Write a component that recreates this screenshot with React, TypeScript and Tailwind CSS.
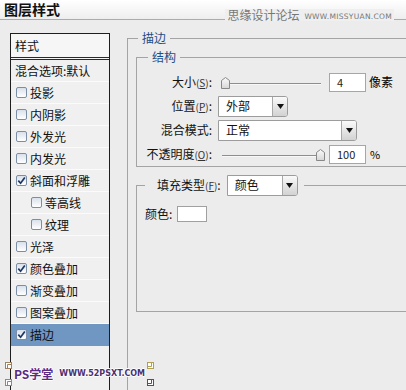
import React from 'react'

const cjk = { fontFamily: '"Noto Sans CJK SC", "Liberation Sans", sans-serif' }

const styleRows = [
  { label: '投影', checked: false },
  { label: '内阴影', checked: false },
  { label: '外发光', checked: false },
  { label: '内发光', checked: false },
  { label: '斜面和浮雕', checked: true },
  { label: '等高线', checked: false, sub: true },
  { label: '纹理', checked: false, sub: true },
  { label: '光泽', checked: false },
  { label: '颜色叠加', checked: true },
  { label: '渐变叠加', checked: false },
  { label: '图案叠加', checked: false },
  { label: '描边', checked: true, active: true },
]

function Checkbox({ checked }: { checked: boolean }) {
  return (
    <span className="flex h-[11px] w-[11px] shrink-0 items-center justify-center rounded-[2px] border border-[#7c8ea6] bg-linear-to-b from-[#d9e1ea] to-white">
      {checked && (
        <svg width="9" height="9" viewBox="0 0 9 9">
          <path d="M1.3 4.6 L3.6 7.2 L7.8 1.4" fill="none" stroke="#1d3764" strokeWidth="1.7" />
        </svg>
      )}
    </span>
  )
}

function Select({ value, width }: { value: string; width: number }) {
  return (
    <div
      className="flex h-[21px] items-stretch rounded-r-[3px] border border-[#9c9c9c] bg-white"
      style={{ width }}
    >
      <span className="flex flex-1 items-center pl-[7px] text-[12px] text-[#111]">{value}</span>
      <span className="flex w-[15px] items-center justify-center rounded-r-[2px] border-l border-[#a8a8a8] bg-linear-to-b from-[#fafafa] to-[#d2d2d2]">
        <svg width="7" height="5" viewBox="0 0 7 5">
          <path d="M0 0 H7 L3.5 5 Z" fill="#111" />
        </svg>
      </span>
    </div>
  )
}

function Slider({ width, thumb, from, to }: { width: number; thumb: number; from: number; to: number }) {
  return (
    <svg width={width} height="20" viewBox={`0 0 ${width} 20`} className="shrink-0">
      <defs>
        <linearGradient id={`th${thumb}`} x1="0" y1="0" x2="0" y2="1">
          <stop offset="0" stopColor="#fbfbfb" />
          <stop offset="1" stopColor="#d6d6d6" />
        </linearGradient>
      </defs>
      <line x1={from} y1="11.5" x2={to} y2="11.5" stroke="#8e8e8e" />
      <line x1={from} y1="12.5" x2={to} y2="12.5" stroke="#f8f8f8" />
      <path
        d={`M${thumb + 0.5} 8.5 L${thumb + 4.5} 5.5 L${thumb + 8.5} 8.5 L${thumb + 8.5} 16.5 L${thumb + 0.5} 16.5 Z`}
        fill={`url(#th${thumb})`}
        stroke="#888"
      />
    </svg>
  )
}

function NumBox({ value }: { value: string }) {
  return (
    <span className="flex h-[19px] w-[37px] shrink-0 items-center border border-[#a6a6a6] bg-white pl-[7px] text-[11px] text-[#222]">
      {value}
    </span>
  )
}

function Label({ children }: { children: React.ReactNode }) {
  return <span className="w-[75px] shrink-0 text-right text-[12px] text-[#111]">{children}</span>
}

function Key({ k }: { k: string }) {
  return (
    <span className="text-[10px] text-[#333]">
      (<u>{k}</u>)
    </span>
  )
}

function Bracket({ color, flip }: { color: string; flip?: boolean }) {
  return (
    <svg width="7" height="7" viewBox="0 0 7 7" style={flip ? { transform: 'rotate(180deg)' } : undefined}>
      <rect x="0.5" y="0.5" width="6" height="6" fill="#fff" stroke={color} />
      <path d="M2.5 6.5 V2.5 H6.5" fill="none" stroke={color} />
    </svg>
  )
}

export default function App() {
  return (
    <div className="relative h-[390px] w-[406px] overflow-hidden bg-[#ececec] leading-none" style={cjk}>
      {/* title bar */}
      <div className="flex h-[20px] items-end justify-between border-b border-[#ababab] bg-linear-to-b from-white to-[#eeeeee] pl-[4px] pr-[12px]">
        <span className="mb-[3px] text-[14px] font-bold text-[#111]">图层样式</span>
        <span className="-mb-[2px] flex items-end gap-[5px] bg-[#efefef] px-[2px] text-[#777]">
          <span className="text-[12px]">思缘设计论坛</span>
          <span className="mb-[1px] text-[7.5px] tracking-[0.3px]" style={{ fontFamily: '"DejaVu Sans", sans-serif' }}>
            WWW.MISSYUAN.COM
          </span>
        </span>
      </div>

      <div className="flex h-[370px]">
        {/* style list */}
        <div className="ml-[10px] mt-[13px] w-[100px] shrink-0 border border-b-0 border-[#1e1e1e] bg-[#f0f0f0] text-[12px] text-[#111]">
          <div className="flex h-[26px] items-center border-b-[3px] border-double border-[#2a2a2a] bg-[#f6f6f6] pl-[4px]">样式</div>
          <div className="flex h-[22px] items-center border-b border-[#fbfbfb] pl-[4px]">混合选项:默认</div>
          {styleRows.map((r) => (
            <div
              key={r.label}
              className={`flex h-[22px] items-center gap-[3px] border-b ${
                r.active ? 'border-[#7096c2] bg-[#7096c2]' : 'border-[#fbfbfb]'
              } ${r.sub ? 'pl-[20px]' : 'pl-[5px]'}`}
            >
              <Checkbox checked={r.checked} />
              <span>{r.label}</span>
            </div>
          ))}
        </div>

        {/* stroke options */}
        <fieldset className="ml-[17px] mt-[10px] h-[400px] w-[300px] shrink-0 border border-[#a4a4a4] pl-[8px]">
          <legend className="ml-[2px] px-[4px] text-[12px] leading-[16px] text-[#1c4e88]">描边</legend>

          <fieldset className="mt-[3px] border border-[#a4a4a4] pb-[2px]">
            <legend className="ml-[11px] px-[4px] text-[12px] leading-[16px] text-[#1c4e88]">结构</legend>
            <div className="flex flex-col gap-[4px] pt-[7px]">
              <div className="flex h-[20px] items-center">
                <Label>
                  大小<Key k="S" />:
                </Label>
                <span className="ml-[6px]">
                  <Slider width={104} thumb={3} from={12} to={103} />
                </span>
                <span className="ml-[7px]">
                  <NumBox value="4" />
                </span>
                <span className="ml-[3px] text-[12px]">像素</span>
              </div>
              <div className="flex h-[20px] items-center">
                <Label>
                  位置<Key k="P" />:
                </Label>
                <span className="ml-[6px]">
                  <Select value="外部" width={70} />
                </span>
              </div>
              <div className="flex h-[20px] items-center">
                <Label>混合模式:</Label>
                <span className="ml-[6px]">
                  <Select value="正常" width={139} />
                </span>
              </div>
              <div className="flex h-[20px] items-center">
                <Label>
                  不透明度<Key k="O" />:
                </Label>
                <span className="ml-[6px]">
                  <Slider width={108} thumb={98} from={4} to={99} />
                </span>
                <span className="ml-[3px]">
                  <NumBox value="100" />
                </span>
                <span className="ml-[4px] text-[11px]">%</span>
              </div>
            </div>
          </fieldset>

          <fieldset className="mt-[7px] h-[138px] border border-[#a4a4a4]">
            <legend className="ml-[8px] px-[6px]">
              <div className="flex h-[22px] items-center text-[12px] text-[#111]">
                <span className="ml-[6px]">
                  填充类型<Key k="F" />:
                </span>
                <span className="ml-[6px]">
                  <Select value="颜色" width={71} />
                </span>
              </div>
            </legend>
            <div className="flex items-center pl-[8px] pt-[10px] text-[12px] text-[#111]">
              <span className="w-[32px]">颜色:</span>
              <span className="h-[16px] w-[30px] border border-[#a0a0a0] bg-white" />
            </div>
          </fieldset>
        </fieldset>
      </div>

      {/* site watermark */}
      <div className="absolute left-[5px] top-[362px] flex items-center gap-[2px]">
        <div className="flex flex-col gap-[10px]">
          <Bracket color="#a08060" />
          <Bracket color="#6aa060" />
        </div>
        <span className="text-[12px] font-bold text-[#5b2a82] [text-shadow:0_0_1px_#fff,1px_0_0_#fff,-1px_0_0_#fff,0_1px_0_#fff,0_-1px_0_#fff]">
          PS学堂
        </span>
        <span
          className="ml-[4px] text-[8px] font-bold text-[#4b2f72] [text-shadow:1px_0_0_#fff,-1px_0_0_#fff,0_1px_0_#fff,0_-1px_0_#fff]"
          style={{ fontFamily: '"DejaVu Sans", sans-serif' }}
        >
          WWW.52PSXT.COM
        </span>
        <div className="flex flex-col gap-[10px]">
          <Bracket color="#b0a050" flip />
          <Bracket color="#505070" flip />
        </div>
      </div>
    </div>
  )
}
